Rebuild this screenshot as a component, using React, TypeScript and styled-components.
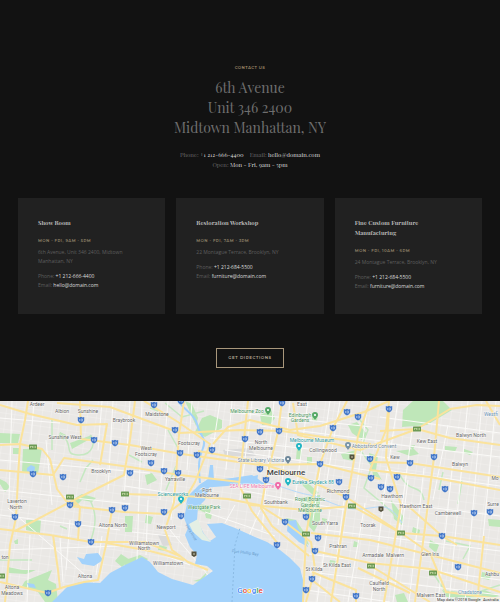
import React from "react";
import styled, { createGlobalStyle } from "styled-components";

const Global = createGlobalStyle`
  * { box-sizing: border-box; }
  body { margin: 0; background: #121212; }
  h1, h2, p, address { margin: 0; font-style: normal; }
`;

const serif = `"Playfair Display", "Liberation Serif", serif`;
const sans = `"Open Sans", sans-serif`;
const caps = `Montserrat, "Open Sans", sans-serif`;

const Page = styled.main`
  background: #121212;
  color: #5c5c5c;
`;

const Contact = styled.section`
  display: flex;
  flex-direction: column;
  align-items: center;
  padding: 64px 18px 33px;
`;

const Eyebrow = styled.p`
  font: 600 4px/8px ${caps};
  letter-spacing: 0.1em;
  color: #a08c6c;
`;

const Heading = styled.h1`
  margin-top: 6px;
  font: 400 14px/20px ${serif};
  text-align: center;
  color: #6e6e6e;
`;

const Line = styled.span`
  display: block;
`;

const Info = styled.div`
  margin-top: 12px;
  font: 400 6px/10px ${serif};
  text-align: center;
  color: #686868;
`;

const InfoRow = styled.p`
  display: flex;
  justify-content: center;
  gap: 6px;
`;

const Strong = styled.a`
  color: #dcdcdc;
  text-decoration: none;
`;

const Hours = styled.span`
  color: #dcdcdc;
`;

const Cards = styled.div`
  display: grid;
  grid-template-columns: repeat(3, 1fr);
  gap: 11px;
  width: 100%;
  margin-top: 28px;
`;

const Card = styled.article`
  padding: 20px 20px 23px 20px;
  background: #212121;
`;

const CardTitle = styled.h2`
  max-width: 80px;
  font: 700 6px/10px ${serif};
  color: #b8b8b8;
`;

const CardHours = styled.p`
  margin-top: 9px;
  font: 600 4px/7px ${caps};
  letter-spacing: 0.1em;
  white-space: nowrap;
  color: #8f8168;
`;

const CardText = styled.p<{ $gap: number }>`
  margin-top: ${(p) => p.$gap}px;
  font: 400 5px/9px ${sans};
  color: #5e5e5e;
`;

const Button = styled.button`
  height: 20px;
  margin-top: 34px;
  padding: 0 11px;
  border: 1px solid #a8977c;
  background: transparent;
  font: 600 4px/8px ${caps};
  letter-spacing: 0.15em;
  color: #b9ad9a;
  cursor: pointer;
`;

const MapDrawing = styled.svg`
  display: block;
  width: 100%;
  height: auto;
  font-family: Roboto, sans-serif;
`;

const shops = [
  { title: "Show Room", hours: "MON - FRI, 9AM - 5PM", address: "6th Avenue, Unit 346 2400, Midtown Manhattan, NY", phone: "+1 212-666-4400", email: "hello@domain.com" },
  { title: "Restoration Workshop", hours: "MON - FRI, 7AM - 3PM", address: "22 Montague Terrace, Brooklyn, NY", phone: "+1 212-684-5500", email: "furniture@domain.com" },
  { title: "Fine Custom Furniture Manufacturing", hours: "MON - FRI, 10AM - 6PM", address: "24 Montague Terrace, Brooklyn, NY", phone: "+1 212-684-5500", email: "furniture@domain.com" },
];

const parks = [
  "M0 433L20 434L18 443L0 443Z", "M23 449L42 448L38 474L22 472Z",
  "M0 479L6 482L10 487L5 492L0 484Z", "M13 448h7v6h-7Z",
  "M195 432L202 418L210 415L222 420L222 428L205 437Z",
  "M402 427L403 410L413 401L443 401L452 410L427 425Z",
  "M185 401L192 404L198 418L196 426L190 412Z",
  "M26 520L41 520L40 533L26 530Z", "M14 541l4 -2v5h-3Z",
  "M25 581L40 575L52 570L48 580L56 584L58 602L45 602L38 592L22 586Z",
  "M8 567L22 570L36 570L26 574L9 573Z",
  "M115 561L121 554L130 560L122 567Z",
  "M60 432l6 3l-2 5l-6-2Z", "M70 443l22-8l-2 4l-18 10Z",
  "M73 499L82 494L96 498L92 502L82 500L74 508Z",
  "M125 560L140 555L148 559L145 562L125 567Z",
  "M125 516h8l-1 16h-7Z", "M146 515l7 2l-2 7l-6-1Z",
  "M145 475L152 473L157 480L147 485Z", "M159 545l8 2l-1 4l-8-1Z",
  "M192 503L212 506L209 516L204 512L194 509Z",
  "M205 514L212 514L211 519L206 518Z",
  "M193 581L200 579L208 571L202 582Z",
  "M260 415L271 410L275 418L270 425L262 425Z",
  "M312 413l6 1l-1 7l-5-1Z", "M297 448h5l-1 11h-5Z",
  "M307 457h5v7h-5Z", "M299 480l10 4l10 9l-6 2l-9-8Z",
  "M298 498L320 495L320 520L314 532L308 525L306 514Z",
  "M286 518L296 520L304 532L309 545L301 541L288 526Z",
  "M348 425L357 422L367 434L362 440L352 433Z",
  "M341 454L356 450L354 461L343 459Z",
  "M369 453L378 456L376 470L382 480L373 475Z",
  "M391 500L404 517L402 525L394 519Z",
  "M445 446l12 1l-2 5l-10-2Z", "M464 449l9 3l-3 3l-6-2Z",
  "M396 451l18-2l5 5l-9 2Z", "M409 446l6-1l-2 5Z",
  "M488 519l12 1v7l-11-1Z", "M395 595l9-2l4 9h-11Z",
  "M482 572l10 2l-3 6l-8-2Z", "M330 560l6 1l-1 4h-6Z",
  "M322 518l5 1v4h-5Z", "M354 541l5 2l-2 4h-4Z",
  "M413 527l7 3l-1 5l-7-3Z", "M430 540l9 5l-3 8l-7-6Z",
  "M442 590L457 594L484 590L500 596L480 600L447 598Z",
];

const greenways = [
  "M60 433C76 446 62 454 78 455S96 440 90 435",
  "M52 420V450M80 482L86 468L93 460", "M90 500C96 512 97 522 91 540",
  "M165 403L182 417L204 411", "M168 430L178 448M176 466L166 490",
  "M400 475C410 495 420 482 424 500", "M446 541L470 546L463 559",
  "M356 415L368 430L360 450L372 466L364 488L382 503L402 522",
  "M433 573L445 591L472 594L500 585", "M439 490L443 472M462 480L458 504",
  "M150 408L158 411M129 455L142 462M60 526L67 529M0 560L32 560",
];

const minorRoads = [
  "M0 418L60 423M0 460L150 473M0 490L130 504M12 401L9 500M34 401L31 440M46 440L52 505M102 401L98 450M113 401L108 490",
  "M0 515L120 530M30 535L27 602M60 538L63 582M8 508L100 588M70 520L66 570M102 536L96 575M0 550L120 546",
  "M130 401L124 500M142 401L137 560M168 401L160 500M180 430L171 520M192 401L187 470M125 486L184 495M132 532L180 537M148 500L146 555",
  "M220 401L213 448M232 401L226 470M252 401L240 500M274 401L262 530M290 401L278 525M308 401L295 500M330 401L313 520",
  "M210 438L390 458M225 450L380 472M240 490L345 510M230 412L372 427M260 426L390 442M340 401L327 480M368 401L355 500",
  "M330 510L317 602M344 501L331 602M365 503L348 602M384 500L371 602M408 480L393 602M424 468L409 602M453 460L438 602M468 401L449 602M482 401L465 602M496 401L477 602",
  "M380 417L500 433M375 442L500 457M385 470L500 486M370 500L500 516M325 530L500 551M309 554L500 580M310 572L500 595M306 590L390 602",
  "M398 401L383 500M412 430L399 530M448 425L433 500M205 512L275 536M150 550L190 565M170 530L208 575M235 505L225 523M260 510L249 536",
];

const majorRoads = [
  "M28 401L25 420L20 444L18 478L16 518L10 545L7 580L5 602",
  "M0 445L20 444L42 449L50 459L57 489L66 501L76 505",
  "M0 470L53 475L64 458L130 467L180 475L240 482",
  "M15 531L70 502L124 475L130 440L135 401",
  "M0 529L50 535L91 542L145 542L180 556",
  "M70 497L80 507L78 541M112 510L106 545L98 580L84 582L64 587L47 593L0 582",
  "M53 535L58 570L60 588M106 543L150 551L184 560",
  "M0 405L30 414L77 425L107 424L100 465", "M57 403L110 407L180 433L240 430L282 431L371 444",
  "M80 401L81 439L130 445L182 454L260 465L320 464L380 479",
  "M144 401L178 422L210 444L195 482L184 501L166 514L124 512L70 506",
  "M184 401L179 435L174 502L165 530L172 550L188 562L208 570",
  "M198 451L250 460L294 474L346 497L401 533L430 553L446 592L500 599",
  "M125 494L185 496L228 499L259 505L281 519L311 542L315 569L306 602",
  "M248 401L244 439L239 485L252 511L279 545",
  "M282 401L278 432L266 480L261 508L272 526L309 556",
  "M213 444L228 427L250 420L290 430L320 426L364 412L389 401",
  "M293 403L298 435L360 450L417 429L450 409L477 405L500 406",
  "M347 401L333 428L320 464L306 534L303 602",
  "M370 401L358 436L352 472L346 506L331 602",
  "M389 401L386 430L370 470L430 477L500 490",
  "M380 431L417 429L450 438L500 445", "M370 462L410 463L500 477",
  "M439 401L434 457L424 535L415 602", "M389 409L386 458L401 505L384 602",
  "M250 505L306 510L352 506L401 533L442 536L500 545",
  "M311 533L370 540L430 555L500 573", "M315 551L370 563L430 569L500 592",
  "M312 580L340 602M312 572L356 590L356 602M358 568L410 593M371 566L430 602",
  "M407 505L442 536L457 545M484 536L477 602M486 401L500 425",
];

const bay = "M52 602L58 596L67 587L80 582L100 583L110 573L125 565L142 557L150 562L158 572L172 579L193 585L213 571L207 566L195 564L197 555L190 547L185 535L188 528L184 518L187 504L196 492L210 485L205 500L198 507L197 520L204 534L210 541L216 537L207 524L222 523L235 528L255 537L267 542L280 550L290 558L300 568L303 580L304 602Z";

const waters = [
  "M210 465L213 465L214 480L232 478L252 475L258 479L265 484L250 484L227 486L201 488L186 505L188 496L199 485L208 479Z",
  "M250 477L258 475L257 482L249 484Z",
  "M288 521L296 520L298 528L304 537L308 547L299 542L287 531Z",
  "M77 557L84 559L86 554L98 553L103 560L94 566L82 564Z",
  "M27 468l4-3l4 2l-1 6l-7-2Z", "M27 583l7 1l2 4l-7-1Z",
];

const blueShields = [
  [81, 420], [94, 440], [115, 443], [33, 474], [63, 477], [130, 473], [70, 505], [154, 405], [181, 401], [175, 430], [180, 453], [197, 455], [212, 450], [151, 463], [164, 471], [178, 473], [245, 439],
  [282, 403], [260, 432], [279, 431], [347, 412], [358, 417], [333, 428], [320, 464], [370, 459], [260, 469], [266, 480], [339, 482], [346, 497], [371, 478],
  [389, 409], [434, 457], [410, 463], [397, 477], [381, 487], [390, 489], [445, 489], [112, 510], [125, 508], [15, 517], [78, 524], [91, 542], [48, 593],
  [164, 512], [181, 516], [306, 517], [285, 522], [318, 538], [277, 545], [315, 551], [312, 579], [306, 590], [356, 596], [474, 513], [490, 512], [442, 536], [458, 567],
];
const greenShields = [[33, 447], [70, 497], [125, 494], [247, 496], [417, 429], [1, 576], [352, 506], [306, 534], [371, 566], [401, 533], [433, 573]];
const darkShields = [[352, 457], [194, 554], [381, 509]];

const pins: [number, number, string][] = [
  [181, 500, "#20b5c4"], [268, 411, "#54a866"], [315, 416, "#54a866"], [299, 447, "#20b5c4"],
  [348, 446, "#7995a8"], [288, 460, "#6d8799"], [278, 486, "#f06ba8"], [288, 482, "#20b5c4"],
];

const GREY = "#666";
const TEAL = "#2c9aa5";
const GREEN = "#4b9560";
const SLATE = "#71899a";

type Place = [string, number, number, string?];
const places: Place[] = [
  ["Ardeer", 37, 404], ["Albion", 62, 411], ["Sunshine", 88, 411], ["Braybrook", 124, 420], ["Sunshine West", 65, 437], ["Brooklyn", 101, 471],
  ["Laverton", 17, 501], ["North", 16, 507], ["Maidstone", 157, 414], ["West", 146, 448], ["Footscray", 146, 454], ["Footscray", 189, 443], ["Yarraville", 175, 479],
  ["Scienceworks", 173, 494, TEAL], ["Port", 207, 490], ["Melbourne", 207, 495], ["Melbourne Zoo", 247, 411, GREEN], ["East", 302, 404],
  ["Edinburgh", 300, 415, GREEN], ["Gardens", 300, 420, GREEN], ["North", 261, 442], ["Melbourne", 261, 448], ["Melbourne Museum", 312, 440, TEAL],
  ["Collingwood", 323, 450], ["Abbotsford Convent", 374, 446, SLATE], ["State Library Victoria", 261, 460, SLATE], ["SEA LIFE Melbourne", 252, 486, "#ee7aae"],
  ["Eureka Skydeck 88", 313, 482, TEAL], ["Richmond", 338, 491], ["Southbank", 276, 502], ["Royal Botanic", 310, 499, GREEN], ["Gardens", 310, 505, GREEN], ["Melbourne", 310, 510, GREEN],
  ["Kew East", 427, 441], ["Kew", 395, 457], ["Balwyn North", 471, 435], ["Balwyn", 460, 464], ["Westfi", 491, 414, "#6790b5"], ["Mo", 495, 478], ["Surre", 493, 504],
  ["Hawthorn", 392, 496], ["Hawthorn East", 416, 506], ["Camberwell", 448, 513], ["Westgate Park", 204, 507, GREEN], ["Newport", 166, 527],
  ["Williamstown", 144, 543], ["North", 144, 548], ["Williamstown", 168, 563], ["Altona North", 113, 525], ["Altona", 85, 576], ["Altona", 12, 587], ["Meadows", 12, 593], ["ton", 5, 557],
  ["South Yarra", 325, 523], ["Toorak", 368, 525], ["Prahran", 338, 546], ["Armadale", 373, 555], ["St Kilda East", 337, 565], ["St Kilda", 314, 569],
  ["Caulfield", 379, 583], ["North", 379, 589], ["Malvern", 395, 555], ["Glen Iris", 430, 554], ["Malvern East", 431, 595], ["Chadstone", 470, 592, "#6790b5"], ["Ashbu", 492, 574],
];

const paths = (items: string[]) => items.map((d, i) => <path key={i} d={d} />);

function CityMap() {
  return (
    <MapDrawing viewBox="0 401 500 201" role="img" aria-label="Map of Melbourne">
      <defs>
        <pattern id="streets" width="9" height="8" patternUnits="userSpaceOnUse" patternTransform="rotate(8)">
          <path d="M0 0H9M0 0V8" stroke="#f3f2f0" strokeWidth="1" fill="none" />
        </pattern>
      </defs>
      <rect y="401" width="500" height="201" fill="#eae8e5" />
      <rect y="401" width="500" height="201" fill="url(#streets)" />
      <g fill="#bfe7b9">{paths(parks)}</g>
      <g fill="none" stroke="#c5e8c1" strokeWidth="1.5">{paths(greenways)}</g>
      <path d="M223 450L250 448L256 456L225 456ZM158 535L167 534L172 545L163 546Z" fill="#dadada" />
      <g fill="none" stroke="#fbfaf8" strokeWidth="1">{paths(minorRoads)}</g>
      <path d={bay} fill="#a3d2fb" />
      <g fill="#a3d2fb">{paths(waters)}</g>
      <path d="M178 401C184 410 195 414 197 424S207 438 203 448S198 463 200 483" fill="none" stroke="#a3d2fb" strokeWidth="2" />
      <path d="M189 524L198 519L203 533L211 542L202 540L193 532" fill="#e4efe4" />
      <path d="M264 481C288 489 298 493 310 495S340 510 360 509S388 500 402 523" fill="none" stroke="#b7dafa" strokeWidth="1" />
      <g fill="none" stroke="#fbe39c" strokeWidth="2" strokeLinejoin="round">{paths(majorRoads)}</g>
      <path d="M232 602L235 545L240 528" fill="none" stroke="#8bbbe4" strokeWidth="1" strokeDasharray="2 2" />
      {blueShields.map(([x, y], i) => (
        <g key={i} transform={`translate(${x} ${y})`}>
          <path d="M-3.2 -2.9L-1.6 -2.4L0 -3.2L1.6 -2.4L3.2 -2.9V0.5Q2.7 2.5 0 3.5Q-2.7 2.5 -3.2 0.5Z" fill="#4277c9" />
          <path d="M-1.5 -1V1M0 -1H1.5V1H0Z" fill="none" stroke="#d7e2f4" strokeWidth="0.5" />
        </g>
      ))}
      {greenShields.map(([x, y], i) => (
        <g key={i} transform={`translate(${x} ${y})`}>
          <rect x="-4" y="-2.5" width="8" height="5" rx="0.5" fill="#6c9a54" />
          <path d="M-2.5 1V-1L-1.5 0L-0.5 -1V1M1 -1V1M2.5 -1V1" fill="none" stroke="#e6efc4" strokeWidth="0.5" />
        </g>
      ))}
      {darkShields.map(([x, y], i) => (
        <g key={i} transform={`translate(${x} ${y})`}>
          <path d="M-2.5 -2.5H2.5V1.5L0 3L-2.5 1.5Z" fill="#55523f" />
          <circle r="0.8" fill="#ded9bd" />
        </g>
      ))}
      {pins.map(([x, y, fill], i) => (
        <g key={i} transform={`translate(${x} ${y})`}>
          <path d="M0 4C-1 2 -3 1 -3 -1A3 3 0 0 1 3 -1C3 1 1 2 0 4Z" fill={fill} />
          <circle cy="-1" r="1.1" fill="#fff" />
        </g>
      ))}
      <g fontSize="5" textAnchor="middle" stroke="#fff" strokeWidth="1" strokeOpacity="0.7" paintOrder="stroke">
        {places.map(([name, x, y, fill], i) => (
          <text key={i} x={x} y={y + 2} fill={fill ?? GREY}>{name}</text>
        ))}
        <text x="286" y="475" fontSize="8" fontWeight="500" fill="#444">Melbourne</text>
      </g>
      <g fontSize="4" fill="#6a9ccb" textAnchor="middle">
        <text transform="translate(245 554) rotate(7)">Port Phillip Bay</text>
        <text transform="translate(190 533) rotate(58)">Yarra River</text>
      </g>
      <text x="250" y="593" fontSize="8" fontWeight="500" textAnchor="middle" stroke="#fff" strokeWidth="1" paintOrder="stroke">
        <tspan fill="#4285f4">G</tspan><tspan fill="#ea4335">o</tspan><tspan fill="#fbbc05">o</tspan><tspan fill="#4285f4">g</tspan><tspan fill="#34a853">l</tspan><tspan fill="#ea4335">e</tspan>
      </text>
      <rect x="436" y="597" width="64" height="5" fill="#f5f5f5" fillOpacity="0.7" />
      <g fontSize="4" fill="#333">
        <text x="437" y="601">Map data ©2018 Google</text>
        <text x="483" y="601">Australia</text>
      </g>
    </MapDrawing>
  );
}

export default function App() {
  return (
    <Page>
      <Global />
      <Contact>
        <Eyebrow>CONTACT US</Eyebrow>
        <Heading>
          <Line>6th Avenue</Line>
          <Line>Unit 346 2400</Line>
          <Line>Midtown Manhattan, NY</Line>
        </Heading>
        <Info>
          <InfoRow>
            <span>Phone: <Strong href="tel:+12126664400">+1 212-666-4400</Strong></span>
            <span>Email: <Strong href="mailto:hello@domain.com">hello@domain.com</Strong></span>
          </InfoRow>
          <InfoRow><span>Open: <Hours>Mon - Fri, 9am - 5pm</Hours></span></InfoRow>
        </Info>
        <Cards>
          {shops.map((shop) => (
            <Card key={shop.title}>
              <CardTitle>{shop.title}</CardTitle>
              <CardHours>{shop.hours}</CardHours>
              <CardText $gap={4}>{shop.address}</CardText>
              <CardText $gap={6}>
                Phone: <Strong href={`tel:${shop.phone.replace(/[ -]/g, "")}`}>{shop.phone}</Strong>
                <br />
                Email: <Strong href={`mailto:${shop.email}`}>{shop.email}</Strong>
              </CardText>
            </Card>
          ))}
        </Cards>
        <Button type="button">GET DIRECTIONS</Button>
      </Contact>
      <CityMap />
    </Page>
  );
}
